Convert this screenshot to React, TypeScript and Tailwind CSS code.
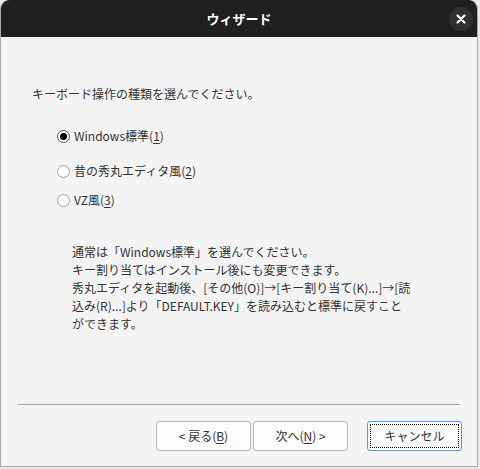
import React from 'react'

const font = { fontFamily: '"Noto Sans CJK JP", "Noto Sans", sans-serif' }

function Radio({ checked, label, mnemonic }: { checked?: boolean; label: string; mnemonic: string }) {
  return (
    <div className="flex h-[18px] items-center">
      <span
        className={`flex h-[13px] w-[13px] items-center justify-center rounded-full border bg-white ${
          checked ? 'border-[#555]' : 'border-[#a0a0a0]'
        }`}
      >
        {checked && <span className="h-[7px] w-[7px] rounded-full bg-black" />}
      </span>
      <span className="ml-[4px] text-[12px] leading-[18px] text-[#333]">
        {label}(<span className="underline underline-offset-2">{mnemonic}</span>)
      </span>
    </div>
  )
}

function Button({ children, focused }: { children: React.ReactNode; focused?: boolean }) {
  return (
    <button
      className={`relative flex h-[30px] w-[95px] items-center justify-center rounded-[3px] border bg-[#fcfcfc] text-[12px] text-[#333] ${
        focused ? 'border-[#4a9cf0]' : 'border-[#b4b4b4]'
      }`}
    >
      {focused && <span className="absolute inset-[2px] border border-dotted border-black" />}
      {children}
    </button>
  )
}

export default function App() {
  return (
    <div className="h-[469px] w-[480px] bg-[#e9e9e9]" style={font}>
      <div className="flex h-[467px] w-[478px] flex-col overflow-hidden rounded-t-[9px] border-x border-b border-[#a9a9a9] bg-[#f4f4f4]">
        <div className="relative flex h-[37px] shrink-0 items-center justify-center bg-[#202020]">
          <span className="text-[13px] font-bold text-white">ウィザード</span>
          <span className="absolute right-[4px] top-[7px] flex h-[24px] w-[24px] items-center justify-center rounded-full bg-[#2f2f2f]">
            <svg width="10" height="10" viewBox="0 0 10 10">
              <path d="M1.5 1.5 L8.5 8.5 M8.5 1.5 L1.5 8.5" stroke="white" strokeWidth="2.2" strokeLinecap="round" />
            </svg>
          </span>
        </div>

        <div className="flex flex-1 flex-col">
          <p className="ml-[31px] mt-[48px] text-[12px] leading-[18px] text-[#333]">
            キーボード操作の種類を選んでください。
          </p>

          <div className="ml-[56px] mt-[24px] flex flex-col">
            <Radio checked label="Windows標準" mnemonic="1" />
            <div className="mt-[17px]">
              <Radio label="昔の秀丸エディタ風" mnemonic="2" />
            </div>
            <div className="mt-[11px]">
              <Radio label="VZ風" mnemonic="3" />
            </div>
          </div>

          <div className="ml-[71px] mt-[34px] whitespace-nowrap text-[12px] leading-[18px] text-[#333]">
            <p>通常は「Windows標準」を選んでください。</p>
            <p>キー割り当てはインストール後にも変更できます。</p>
            <p>
              秀丸エディタを起動後、[その他(O)]→[キー割り当て(K)...]→[読
              <br />
              込み(R)...]より「DEFAULT.KEY」を読み込むと標準に戻すこと
              <br />
              ができます。
            </p>
          </div>

          <div className="flex-1" />

          <div className="mx-[17px] h-px bg-[#a5a5a5]" />

          <div className="mb-[15px] mr-[15px] mt-[16px] flex justify-end">
            <div className="flex gap-[2px]">
              <Button>
                &lt; 戻る(<span className="underline underline-offset-2">B</span>)
              </Button>
              <Button>
                次へ(<span className="underline underline-offset-2">N</span>) &gt;
              </Button>
            </div>
            <div className="ml-[19px]">
              <Button focused>キャンセル</Button>
            </div>
          </div>
        </div>
      </div>
    </div>
  )
}
